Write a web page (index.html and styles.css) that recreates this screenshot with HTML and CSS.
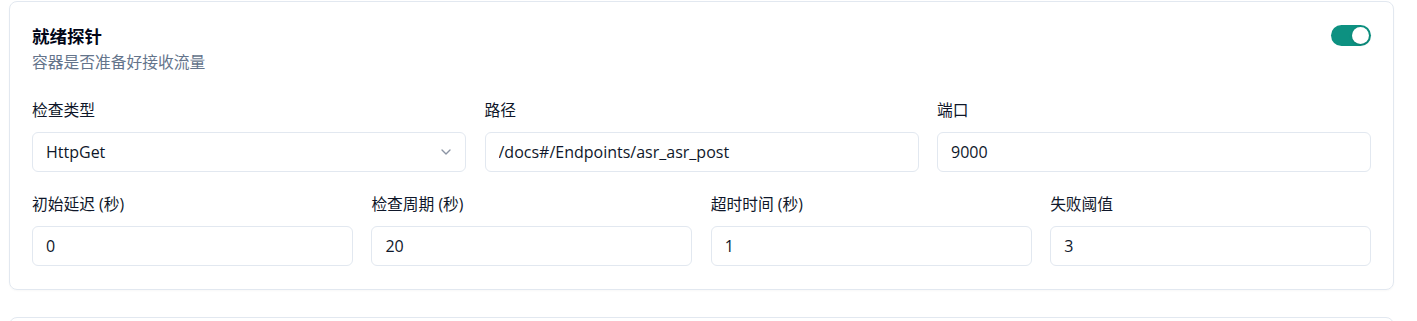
FILE: index.html
```html
<!DOCTYPE html>
<html lang="zh-CN">
<head>
    <meta charset="UTF-8">
    <meta name="viewport" content="width=device-width, initial-scale=1.0">
    <title>就绪探针</title>
    <link rel="stylesheet" href="styles.css">
</head>
<body>
    <div class="page">
        <div class="probe-card">
            <div class="probe-header">
                <div>
                    <h3 class="probe-title">就绪探针</h3>
                    <p class="probe-desc">容器是否准备好接收流量</p>
                </div>
                <button class="toggle toggle-on" aria-label="启用"><span class="toggle-knob"></span></button>
            </div>

            <div class="field-grid cols-3">
                <div class="field">
                    <label class="field-label">检查类型</label>
                    <div class="select">
                        <span>HttpGet</span>
                        <svg class="chevron" width="16" height="16" viewBox="0 0 24 24" fill="none" stroke="currentColor" stroke-width="2" stroke-linecap="round" stroke-linejoin="round"><path d="M6 9l6 6 6-6"/></svg>
                    </div>
                </div>
                <div class="field">
                    <label class="field-label">路径</label>
                    <input class="input" type="text" value="/docs#/Endpoints/asr_asr_post">
                </div>
                <div class="field">
                    <label class="field-label">端口</label>
                    <input class="input" type="text" value="9000">
                </div>
            </div>

            <div class="field-grid cols-4">
                <div class="field">
                    <label class="field-label">初始延迟 (秒)</label>
                    <input class="input" type="text" value="0">
                </div>
                <div class="field">
                    <label class="field-label">检查周期 (秒)</label>
                    <input class="input" type="text" value="20">
                </div>
                <div class="field">
                    <label class="field-label">超时时间 (秒)</label>
                    <input class="input" type="text" value="1">
                </div>
                <div class="field">
                    <label class="field-label">失败阈值</label>
                    <input class="input" type="text" value="3">
                </div>
            </div>
        </div>

        <div class="probe-card"></div>
    </div>
</body>
</html>
```

FILE: styles.css
```css
body {
    margin: 0;
    background-color: #ffffff;
    font-family: "Segoe UI", "Open Sans", "Noto Sans CJK SC", sans-serif;
    color: #0f172a;
}
.page {
    padding: 1px 23px 0 9px;
    display: flex;
    flex-direction: column;
    gap: 27px;
}
.probe-card {
    border: 1px solid #e2e8f0;
    border-radius: 8px;
    padding: 22px 22px 23px;
    min-height: 40px;
    box-shadow: 0 1px 2px rgba(15, 23, 42, 0.03);
}
.probe-header {
    display: flex;
    justify-content: space-between;
    align-items: flex-start;
    margin-bottom: 28px;
}
.probe-title {
    margin: 0;
    font-size: 17.5px;
    line-height: 24px;
    font-weight: 700;
    color: #020617;
}
.probe-desc {
    margin: 4px 0 0;
    font-size: 15.75px;
    line-height: 20px;
    color: #64748b;
}
.toggle {
    margin-top: 1px;
    width: 40px;
    height: 21px;
    border: none;
    border-radius: 11px;
    padding: 0;
    position: relative;
    cursor: pointer;
    background-color: #cbd5e1;
}
.toggle-on {
    background-color: #0d9181;
}
.toggle-knob {
    position: absolute;
    top: 2px;
    left: 2px;
    width: 17px;
    height: 17px;
    border-radius: 50%;
    background-color: #ffffff;
    box-shadow: 0 1px 3px rgba(0, 0, 0, 0.15);
}
.toggle-on .toggle-knob {
    left: 21px;
}
.field-grid {
    display: grid;
    column-gap: 18.5px;
}
.cols-3 {
    grid-template-columns: repeat(3, 1fr);
    margin-bottom: 22px;
}
.cols-4 {
    grid-template-columns: repeat(4, 1fr);
}
.field {
    display: flex;
    flex-direction: column;
    min-width: 0;
}
.field-label {
    font-size: 15.75px;
    line-height: 20px;
    margin-bottom: 12px;
    color: #0f172a;
}
.input,
.select {
    box-sizing: border-box;
    height: 40px;
    width: 100%;
    border: 1px solid #e2e8f0;
    border-radius: 6px;
    padding: 0 13px;
    font-family: inherit;
    font-size: 16px;
    color: #0f172a;
    background-color: #ffffff;
    outline: none;
}
.select {
    display: flex;
    align-items: center;
    justify-content: space-between;
}
.chevron {
    color: #8b94a3;
    margin-right: -2px;
}
```
